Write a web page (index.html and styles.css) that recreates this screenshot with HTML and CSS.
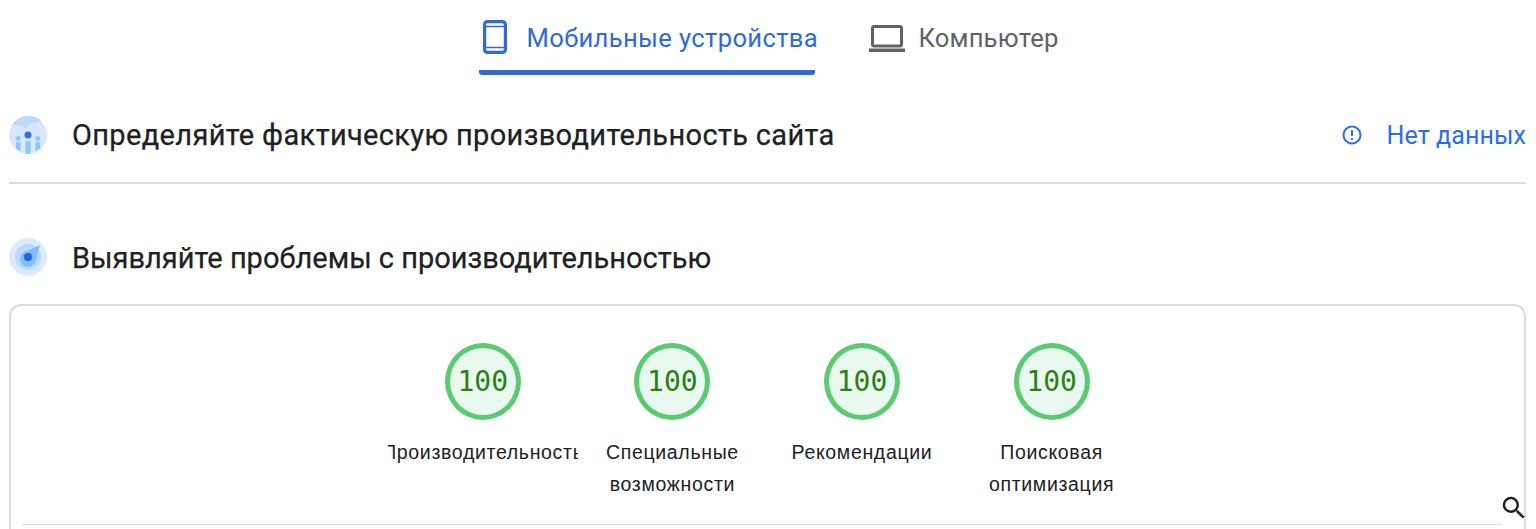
FILE: index.html
```html
<!DOCTYPE html>
<html lang="ru">
<head>
<meta charset="utf-8">
<title>PageSpeed Insights</title>
<link rel="stylesheet" href="styles.css">
</head>
<body>
<nav class="tabs">
  <div class="tab tab-active">
    <svg class="tab-icon-phone" viewBox="0 0 24 34" width="24" height="34"><path fill="none" stroke="#3069de" stroke-width="3.200" d="M4.500 1.600h15a2.900 2.900 0 0 1 2.900 2.900v25a2.900 2.900 0 0 1-2.900 2.900h-15a2.900 2.900 0 0 1-2.900-2.900v-25a2.900 2.900 0 0 1 2.900-2.900z"/><path fill="none" stroke="#3069de" stroke-width="1.500" d="M3 6.500h18M3 27.500h18"/></svg>
    <span>Мобильные устройства</span>
  </div>
  <div class="tab tab-plain">
    <svg class="tab-icon-laptop" viewBox="0 0 36 28" width="36" height="28"><path fill="none" stroke="#5f6368" stroke-width="3" d="M5 2.500h26a1.500 1.500 0 0 1 1.500 1.500v16.500a1.500 1.500 0 0 1-1.500 1.500H5a1.500 1.500 0 0 1-1.500-1.500V4A1.500 1.500 0 0 1 5 2.500z"/><path fill="#5f6368" d="M0 24.500h36V28H0z"/></svg>
    <span>Компьютер</span>
  </div>
</nav>
<section class="field">
  <svg class="section-icon" viewBox="0 0 38 38" width="38" height="38">
    <circle cx="19" cy="19" r="19" fill="#d7e8fe"/>
    <path fill="#bcdafc" d="M3.500 8C7.500 3 13 0 19 0c5 0 9 1 13 4-2 3-6 3-9 3-3 1-4 4-7 5-3 0-4-3-7-3-2 0-4 0-5.500-1z"/>
    <path fill="#8fc7fb" d="M7 26h4.500v9.500L7 32.500zM16.500 25h5v13h-5zM26.500 26H31v6.500l-4.500 3z"/>
    <circle cx="9.200" cy="22.500" r="2.500" fill="#8fc7fb"/><circle cx="28.800" cy="22.500" r="2.500" fill="#8fc7fb"/>
    <circle cx="19" cy="19" r="3.500" fill="#2e6ff2"/>
  </svg>
  <h2 class="section-title title-first">Определяйте фактическую производительность сайта</h2>
  <div class="status">
    <svg viewBox="0 0 20 20" width="20" height="20"><circle cx="10" cy="10" r="8.500" fill="none" stroke="#2a6df4" stroke-width="2"/><path fill="#2a6df4" d="M9 5h2v6H9zM9 13h2v2H9z"/></svg>
    <span>Нет данных</span>
  </div>
</section>
<section class="diagnose">
  <svg class="section-icon" viewBox="0 0 38 38" width="38" height="38">
    <circle cx="19" cy="19" r="19" fill="#dceafe"/>
    <circle cx="19" cy="19" r="13" fill="#bcd8fd"/>
    <path fill="#7fbdfb" d="M31 7l-4 15a8 8 0 1 1-9-9z"/>
    <circle cx="19" cy="19" r="4" fill="#2560e8"/>
  </svg>
  <h2 class="section-title title-second">Выявляйте проблемы с производительностью</h2>
</section>
<div class="card">
  <div class="gauges">
    <div class="gauge"><div class="score">100</div><div class="label">Производительность</div></div>
    <div class="gauge"><div class="score">100</div><div class="label">Специальные возможности</div></div>
    <div class="gauge"><div class="score">100</div><div class="label">Рекомендации</div></div>
    <div class="gauge"><div class="score">100</div><div class="label">Поисковая оптимизация</div></div>
  </div>
  <svg class="magnifier" viewBox="0 0 24 24" width="30" height="30"><path fill="#202124" d="M15.500 14h-.79l-.28-.27A6.470 6.470 0 0 0 16 9.500 6.500 6.500 0 1 0 9.500 16c1.610 0 3.090-.59 4.230-1.570l.27.28v.79l5 4.990L20.490 19l-4.990-5zm-6 0C7.010 14 5 11.990 5 9.500S7.010 5 9.500 5 14 7.010 14 9.500 11.990 14 9.500 14z"/></svg>
  <div class="card-rule"></div>
</div>
</body>
</html>
```
FILE: styles.css
```css
* { box-sizing: border-box; }
html, body { margin: 0; height: 529px; overflow: hidden; background: #fff; }
body { font-family: Roboto, "Noto Sans", sans-serif; color: #202124; }

.tabs { display: flex; justify-content: center; height: 75px; gap: 54px; padding-left: 1px; }
.tab { display: flex; align-items: flex-start; padding-top: 20px; font-size: 25.600px; line-height: 36px; color: #5f6368; letter-spacing: .35px; height: 75px; }
.tab svg { flex: none; }
.tab-plain { gap: 14px; letter-spacing: .15px; }
.tab-active { flex: none; width: 336px; gap: 20px; padding-left: 4px; color: #3069de; border-bottom: 5px solid #3069de; border-radius: 3px; white-space: nowrap; }
.tab-icon-laptop { margin-top: 4px; }

.field { display: flex; align-items: center; height: 109px; margin: 0 10px 0 9px; padding-top: 13px; border-bottom: 2px solid #dadce0; }
.section-icon { flex: none; }
.section-title { margin: 0 0 0 25px; font-weight: 400; line-height: 38px; color: #202124; -webkit-text-stroke: .25px #202124; }
.title-first { font-size: 29px; letter-spacing: .34px; }
.title-second { font-size: 29px; position: relative; top: 1px; }
.status { margin-left: auto; display: flex; align-items: center; gap: 24px; font-size: 25px; color: #2a6df4; letter-spacing: .1px; }

.diagnose { display: flex; align-items: center; margin: 54px 0 0 9px; height: 38px; }

.card { position: relative; margin: 28px 10px 0 9px; height: 225px; padding: 37px 13px 0; border: 2px solid #dadce0; border-bottom: 0; border-radius: 12px 12px 0 0; }
.gauges { display: flex; margin-left: 364px; }
.gauge { width: 189.600px; flex: none; display: flex; flex-direction: column; align-items: center; }
.score { width: 76px; height: 77px; border-radius: 50%; border: 5px solid #5bcb71; background: #e9f9ef; color: #2b8015; font-family: "DejaVu Sans Mono", monospace; font-size: 28px; line-height: 67px; text-align: center; }
.label { width: 190px; height: 64px; margin-top: 16px; padding: 0 10px; overflow: hidden; font-family: "Liberation Sans", Arial, sans-serif; font-size: 19.500px; line-height: 32px; letter-spacing: .67px; text-align: center; color: #202124; display: flex; justify-content: center; }
.gauge:first-child .label { white-space: nowrap; padding: 0; }
.card-rule { position: absolute; left: 11px; right: 22px; top: 218px; height: 1px; background: #dadce0; }
.magnifier { position: absolute; right: -5px; top: 187px; }
```
